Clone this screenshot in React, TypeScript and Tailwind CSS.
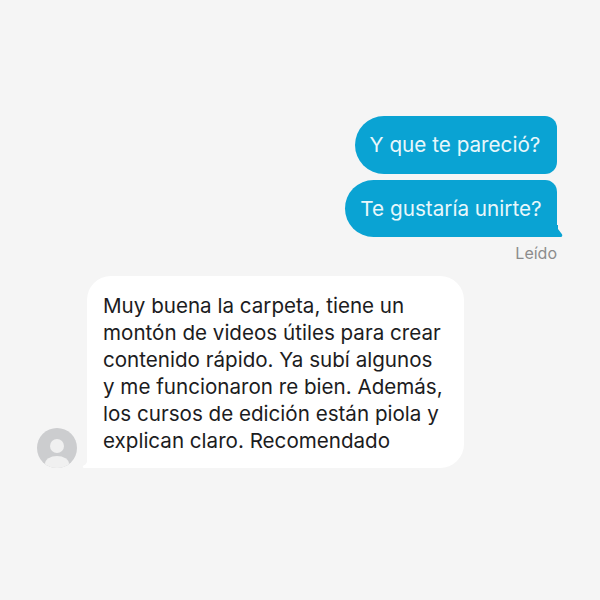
export default function App() {
  return (
    <div className="flex h-[600px] w-[600px] flex-col bg-[#f5f5f5] pl-[37px] pr-[43px] pt-[116px] font-['Inter',sans-serif]">
      <div className="flex flex-col items-end gap-[6px]">
        <div className="flex h-[58px] w-[202px] items-center justify-center rounded-l-[29px] rounded-r-[12px] bg-[#0aa3d3] pr-[2px] text-[20.7px] text-[#e8f7fb]">
          Y que te pareció?
        </div>
        <div className="relative flex h-[57px] w-[212px] items-center justify-center rounded-l-[29px] rounded-r-[12px] rounded-br-[4px] bg-[#0aa3d3] text-[20.7px] text-[#e8f7fb]">
          Te gustaría unirte?
          <svg className="absolute bottom-0 right-[-6px]" width="11" height="12" viewBox="0 0 11 12" aria-hidden>
            <path d="M0 0 L6 0 L6 4 L9.8 9 C10.8 10.4 10.2 12 8.8 12 L0 12 Z" fill="#0aa3d3" />
          </svg>
        </div>
      </div>
      <div className="mt-[7px] text-right text-[16px] leading-[18px] text-[#8c8c8c]">Leído</div>
      <div className="mt-[14px] flex items-end gap-[10px]">
        <svg className="shrink-0" width="40" height="40" viewBox="0 0 40 40" aria-hidden>
          <defs>
            <clipPath id="avatar">
              <circle cx="20" cy="20" r="20" />
            </clipPath>
          </defs>
          <g clipPath="url(#avatar)">
            <rect width="40" height="40" fill="#cccdcf" />
            <circle cx="20" cy="18" r="7" fill="#f0f0f0" />
            <ellipse cx="20" cy="36" rx="12" ry="8" fill="#f0f0f0" />
          </g>
        </svg>
        <div className="relative h-[192px] w-[377px] rounded-[24px] rounded-bl-[4px] bg-white pl-[16px] pt-[16px] text-[20.6px] leading-[27px] text-[#1c1c1e]">
          <svg className="absolute bottom-0 left-[-5px]" width="11" height="12" viewBox="0 0 11 12" aria-hidden>
            <path d="M11 0 L5 0 L5 6 C4.5 7.5 3 9 1.5 9.5 C0.2 10.3 0.8 12 2.2 12 L11 12 Z" fill="#ffffff" />
          </svg>
          <p>Muy buena la carpeta, tiene un</p>
          <p>montón de videos útiles para crear</p>
          <p>contenido rápido. Ya subí algunos</p>
          <p>y me funcionaron re bien. Además,</p>
          <p>los cursos de edición están piola y</p>
          <p>explican claro. Recomendado</p>
        </div>
      </div>
    </div>
  );
}
